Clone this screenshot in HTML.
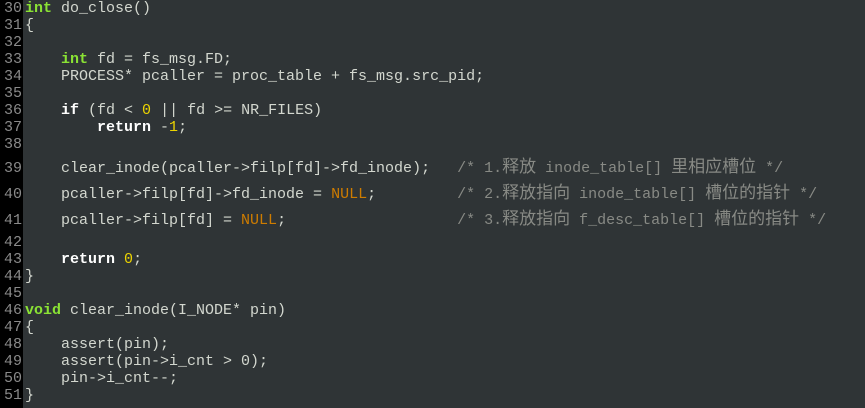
<!DOCTYPE html>
<html><head><meta charset="utf-8"><style>
html,body{margin:0;padding:0;}
body{width:865px;height:408px;background:#2f3436;position:relative;overflow:hidden;font-family:"Liberation Mono","Noto Sans CJK SC",monospace;font-size:15px;color:#d3d7cf;}
.g{position:absolute;left:0;top:0;width:23px;height:408px;background:#000;}
.l{position:absolute;left:0;height:17px;line-height:17px;white-space:pre;}
.n{display:inline-block;width:22px;text-align:right;color:#8a8a8a;margin-right:3px;}
.k{color:#8ae234;font-weight:bold;}
.w{color:#fff;font-weight:bold;}
.y{color:#edd400;}
.o{color:#ce7c00;}
.c{color:#888a85;}
.z{font-size:17px;line-height:17px;}
</style></head><body>
<div class="g"></div>
<div class="l" style="top:0px"><span class="n">30</span><span class="k">int</span> do_close()</div>
<div class="l" style="top:17px"><span class="n">31</span>{</div>
<div class="l" style="top:34px"><span class="n">32</span></div>
<div class="l" style="top:51px"><span class="n">33</span>    <span class="k">int</span> fd = fs_msg.FD;</div>
<div class="l" style="top:68px"><span class="n">34</span>    PROCESS* pcaller = proc_table + fs_msg.src_pid;</div>
<div class="l" style="top:85px"><span class="n">35</span></div>
<div class="l" style="top:102px"><span class="n">36</span>    <span class="w">if</span> (fd &lt; <span class="y">0</span> || fd &gt;= NR_FILES)</div>
<div class="l" style="top:119px"><span class="n">37</span>        <span class="w">return</span> -<span class="y">1</span>;</div>
<div class="l" style="top:136px"><span class="n">38</span></div>
<div class="l" style="top:160px"><span class="n">39</span>    clear_inode(pcaller-&gt;filp[fd]-&gt;fd_inode);   <span class="c">/* 1.<span class="z">释放</span> inode_table[] <span class="z">里相应槽位</span> */</span></div>
<div class="l" style="top:186px"><span class="n">40</span>    pcaller-&gt;filp[fd]-&gt;fd_inode = <span class="o">NULL</span>;         <span class="c">/* 2.<span class="z">释放指向</span> inode_table[] <span class="z">槽位的指针</span> */</span></div>
<div class="l" style="top:212px"><span class="n">41</span>    pcaller-&gt;filp[fd] = <span class="o">NULL</span>;                   <span class="c">/* 3.<span class="z">释放指向</span> f_desc_table[] <span class="z">槽位的指针</span> */</span></div>
<div class="l" style="top:234px"><span class="n">42</span></div>
<div class="l" style="top:251px"><span class="n">43</span>    <span class="w">return</span> <span class="y">0</span>;</div>
<div class="l" style="top:268px"><span class="n">44</span>}</div>
<div class="l" style="top:285px"><span class="n">45</span></div>
<div class="l" style="top:302px"><span class="n">46</span><span class="k">void</span> clear_inode(I_NODE* pin)</div>
<div class="l" style="top:319px"><span class="n">47</span>{</div>
<div class="l" style="top:336px"><span class="n">48</span>    assert(pin);</div>
<div class="l" style="top:353px"><span class="n">49</span>    assert(pin-&gt;i_cnt &gt; 0);</div>
<div class="l" style="top:370px"><span class="n">50</span>    pin-&gt;i_cnt--;</div>
<div class="l" style="top:387px"><span class="n">51</span>}</div>
</body></html>
